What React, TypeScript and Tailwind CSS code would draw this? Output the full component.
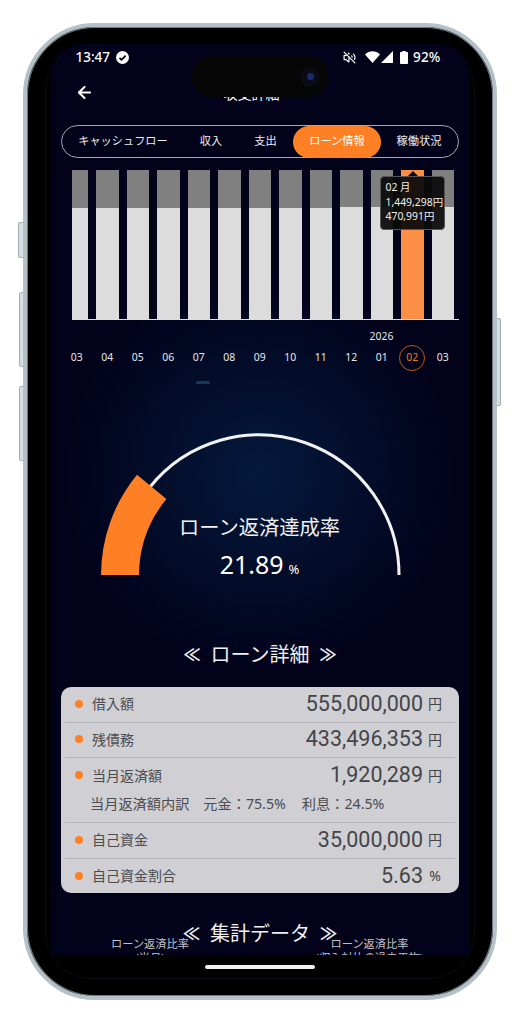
import { ArrowLeft, VolumeOff } from 'lucide-react';

const months = ['03', '04', '05', '06', '07', '08', '09', '10', '11', '12', '01', '02', '03'];
// height of the grey part of each bar
const greyHeights = [38, 38, 38, 38, 38, 37.5, 37.5, 37.5, 37.5, 37, 37, 37, 37];

const rows = [
  { label: '借入額', value: '555,000,000', unit: '円' },
  { label: '残債務', value: '433,496,353', unit: '円' },
];
const bottomRows = [
  { label: '自己資金', value: '35,000,000', unit: '円' },
  { label: '自己資金割合', value: '5.63', unit: '%' },
];

function StatusBar() {
  return (
    <div className="flex h-[26px] items-center justify-between pl-[25px] pr-[29px] text-[13.5px] font-medium text-white">
      <div className="flex items-center gap-[6px]">
        <span>13:47</span>
        <svg width="13" height="13" viewBox="0 0 13 13">
          <circle cx="6.5" cy="6.5" r="6.5" fill="#fff" />
          <path d="M3.5 6.8 5.6 8.8 9.6 4.6" fill="none" stroke="#02021a" strokeWidth="1.8" />
        </svg>
      </div>
      <div className="flex items-center">
        <VolumeOff size={13} strokeWidth={2.2} className="mr-[9px]" />
        <svg width="15" height="12" viewBox="0 0 15 12" className="mr-[1px]">
          <path d="M0 3.4C4.2-.8 10.8-.8 15 3.4L7.5 12Z" fill="#fff" />
        </svg>
        <svg width="12" height="12" viewBox="0 0 12 12" className="mr-[7px]">
          <path d="M12 0V12H0Z" fill="#fff" />
        </svg>
        <svg width="8" height="13" viewBox="0 0 8 13" className="mr-[5px]">
          <path d="M2.3 0H5.7V1H7.2Q8 1 8 1.8V12.2Q8 13 7.2 13H.8Q0 13 0 12.2V1.8Q0 1 .8 1H2.3Z" fill="#fff" />
        </svg>
        <span className="tracking-[0.2px]">92%</span>
      </div>
    </div>
  );
}

function Tabs() {
  return (
    <div className="mx-[10.5px] flex h-[33px] items-center rounded-full border border-[#a8a8ae] text-[11.2px] text-[#eeeeee]">
      <div className="w-[122px] text-center">キャッシュフロー</div>
      <div className="w-[54px] text-center">収入</div>
      <div className="w-[55px] text-center">支出</div>
      <div className="flex h-[32px] w-[88px] items-center justify-center rounded-full bg-[#ff7f24] text-white">ローン情報</div>
      <div className="w-[76px] text-center">稼働状況</div>
    </div>
  );
}

function Chart() {
  return (
    <div className="relative ml-[21px] mt-[12px] w-[387px]">
      <div className="flex h-[150px] gap-[8px] border-b border-[#dddddd]">
        {months.map((m, i) => {
          const active = i === 11;
          return (
            <div key={i} className={`flex flex-col ${i === 0 ? 'w-[16.7px]' : 'w-[22.5px]'}`}>
              <div className={active ? 'bg-[#fb8f45]' : 'bg-[#808080]'} style={{ height: greyHeights[i] }} />
              <div className={`flex-1 ${active ? 'bg-[#fb8f45]' : 'bg-[#dcdcdc]'}`} />
            </div>
          );
        })}
      </div>
      {/* tooltip */}
      <div className="absolute left-[308px] top-[6px] h-[54px] w-[65px] rounded-[4px] border border-[#55555a] bg-[#0b0b0bf0] pl-[5px] pt-[3px] text-[10.4px] leading-[14.5px] text-[#eeeeee]">
        <div className="absolute left-[27px] top-[-6px] h-0 w-0 border-x-[5px] border-b-[5px] border-x-transparent border-b-[#0b0b0b]" />
        <div>02 月</div>
        <div>1,449,298円</div>
        <div>470,991円</div>
      </div>
    </div>
  );
}

function MonthLabels() {
  return (
    <div className="relative ml-[11px] mt-[10px] flex h-[41px] w-[397px] items-end text-[10.4px] text-[#e8e8e8]">
      <div className="absolute left-[302px] top-0 w-[36px] text-center leading-[12px]">2026</div>
      {months.map((m, i) => (
        <div key={i} className="flex h-[26px] w-[30.5px] shrink-0 items-center justify-center">
          {i === 11 ? (
            <span className="flex h-[26px] w-[26px] items-center justify-center rounded-full border border-[#c2560f] text-[#f07a22]">{m}</span>
          ) : (
            m
          )}
        </div>
      ))}
    </div>
  );
}

function Gauge() {
  return (
    <div className="relative ml-[49px] mt-[47px] h-[144px] w-[304px]">
      <svg width="304" height="144" viewBox="0 0 304 144">
        <path d="M299 143A140 140 0 0 0 49.6 55.5" fill="none" stroke="#f2f2f2" strokeWidth="3" />
        <path d="M1 143A159 159 0 0 1 37 42.8L66.4 67A121 121 0 0 0 39 143Z" fill="#ff7f24" />
      </svg>
      <div className="absolute left-[8px] top-[81px] w-[304px] text-center text-[20.3px] leading-[28px] text-[#f0f0f0]">ローン返済達成率</div>
      <div className="absolute left-[8px] top-[114px] flex w-[304px] items-baseline justify-center gap-[5px] leading-[36px] text-white">
        <span className="text-[25px]">21.89</span>
        <span className="text-[13px]">%</span>
      </div>
    </div>
  );
}

function SectionTitle({ text, className }: { text: string; className: string }) {
  return (
    <div className={`flex items-center justify-center gap-[10px] text-[20px] leading-[28px] text-[#f0f0f0] ${className}`}>
      <span className="text-[17px] font-semibold">≪</span>
      <span>{text}</span>
      <span className="text-[17px] font-semibold">≫</span>
    </div>
  );
}

function Row({ label, value, unit, border = true }: { label: string; value: string; unit: string; border?: boolean }) {
  return (
    <div className={`flex h-[35.5px] items-center pb-[1px] pl-[10px] pr-[13px] ${border ? 'border-b border-[#b6b6bb]' : ''}`}>
      <span className="mr-[9px] h-[8px] w-[8px] rounded-full bg-[#ff7f24]" />
      <span className="text-[14px] text-[#4c4c50]">{label}</span>
      <span className="ml-auto font-['Roboto',sans-serif] text-[21.5px] text-[#454548]">{value}</span>
      <span className="ml-[5px] w-[14px] text-center text-[14px] text-[#454548]">{unit}</span>
    </div>
  );
}

function LoanCard() {
  return (
    <div className="mx-[10.5px] mt-[18px] h-[206px] rounded-[10px] bg-[#cfcfd4] px-[4px]">
      {rows.map((r) => (
        <Row key={r.label} {...r} />
      ))}
      <div className="h-[65px] border-b border-[#b6b6bb]">
        <Row label="当月返済額" value="1,920,289" unit="円" border={false} />
        <div className="ml-[25px] flex text-[14.2px] leading-[20px] text-[#4c4c50]">
          <span>当月返済額内訳</span>
          <span className="ml-[14px]">元金：75.5%</span>
          <span className="ml-[16px]">利息：24.5%</span>
        </div>
      </div>
      <Row {...bottomRows[0]} />
      <Row {...bottomRows[1]} border={false} />
    </div>
  );
}

function Summary() {
  return (
    <div className="relative">
      <SectionTitle text="集計データ" className="mt-[27px]" />
      <div className="absolute left-[47px] top-[17px] w-[105px] text-center text-[11.2px] leading-[13.5px] text-[#c4c4c8]">
        ローン返済比率
        <br />
        (当月)
      </div>
      <div className="absolute left-[259px] top-[17px] w-[120px] text-center text-[11.2px] leading-[13.5px] text-[#c4c4c8]">
        ローン返済比率
        <br />
        (収入対比の過去平均)
      </div>
    </div>
  );
}

export default function App() {
  return (
    <div className="relative h-[1024px] w-[520px] overflow-hidden bg-white pl-[23px] pt-[23px] font-['Noto_Sans','Noto_Sans_CJK_JP',sans-serif]">
      {/* hardware buttons */}
      <div className="absolute left-[18px] top-[222px] h-[36px] w-[6px] rounded-l-[2px] border border-[#9fb0b6] bg-[#d5dfe2]" />
      <div className="absolute left-[19px] top-[292px] h-[75px] w-[5px] rounded-l-[2px] border border-[#9fb0b6] bg-[#d5dfe2]" />
      <div className="absolute left-[19px] top-[386px] h-[75px] w-[5px] rounded-l-[2px] border border-[#9fb0b6] bg-[#d5dfe2]" />
      <div className="absolute left-[496px] top-[318px] h-[88px] w-[5px] rounded-r-[2px] border border-[#9fb0b6] bg-[#d5dfe2]" />

      <div className="relative flex h-[977px] w-[474px] flex-col items-center rounded-[72px] border-[4px] border-[#b4c1c6] bg-black pt-[17px] shadow-[inset_0_0_0_1px_#6f7b80]">
        {/* faint display edge */}
        <div className="absolute left-[18px] top-[17px] h-[935px] w-[430px] rounded-[46px] border border-[#0c0c12]" />

        {/* camera island */}
        <div className="absolute left-[164px] top-[29px] z-10 flex h-[41px] w-[138px] items-center justify-end rounded-full bg-[#060606] pr-[9px]">
          <div className="flex h-[20px] w-[20px] items-center justify-center rounded-full bg-[#0b0b16]">
            <div className="h-[7px] w-[7px] rounded-full bg-[#1c2c66]" />
          </div>
        </div>

        <div className="relative h-[911px] w-[419px] shrink-0 overflow-hidden rounded-t-[32px] bg-[radial-gradient(circle_200px_at_209px_430px,#04193c_0%,#02021a_100%)]">
          <StatusBar />
          <div className="flex h-[55px] items-start pl-[24px] pt-[13px]">
            <ArrowLeft size={19} strokeWidth={2.6} className="text-white" />
            <div className="ml-[130px] text-[14px] text-white">収支詳細</div>
          </div>
          <Tabs />
          <Chart />
          <MonthLabels />
          <div className="ml-[145px] mt-[10px] h-[3px] w-[14px] rounded-full bg-[#153a58]" />
          <div className="h-[1px]" />
          <Gauge />
          <SectionTitle text="ローン詳細" className="mt-[65px]" />
          <LoanCard />
          <Summary />
        </div>
        <div className="mt-[10px] h-[4px] w-[110px] rounded-full bg-[#f2f2f2]" />
      </div>
    </div>
  );
}
